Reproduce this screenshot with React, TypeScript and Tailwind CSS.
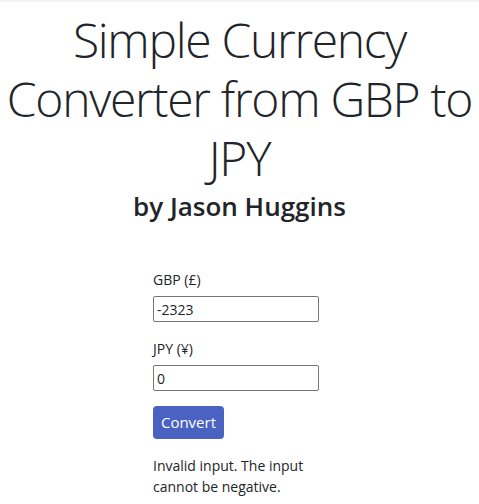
export default function App() {
  return (
    <div className="min-h-[504px] bg-white border-t-2 border-[#f3f3f3] text-[#212529] font-['Open_Sans','Noto_Sans',sans-serif]">
      <div className="pt-[8px] text-center">
        <h1 className="text-[48px] leading-[59px] font-light tracking-[-1.3px]">
          Simple Currency
          <br />
          Converter from GBP to
          <br />
          JPY
        </h1>
        <h2 className="mt-[3px] text-[26px] leading-[32px] font-semibold">by Jason Huggins</h2>
      </div>
      <form className="ml-[153px] mt-[48px] w-[170px] text-[14px]" onSubmit={(e) => e.preventDefault()}>
        <label className="block leading-[20px]">GBP (£)</label>
        <input
          className="mt-[6px] block w-[166px] h-[26px] border border-[#767676] rounded-[2px] px-[3px] text-[14px]"
          defaultValue="-2323"
        />
        <label className="mt-[17px] block leading-[20px]">JPY (¥)</label>
        <input
          className="mt-[6px] block w-[166px] h-[26px] border border-[#767676] rounded-[2px] px-[3px] text-[14px]"
          defaultValue="0"
        />
        <button
          type="submit"
          className="mt-[15px] w-[71px] h-[33px] rounded-[4px] bg-[#4a62c2] text-white text-[15px]"
        >
          Convert
        </button>
        <p className="mt-[16px] text-[14px] leading-[21px]">
          Invalid input. The input
          <br />
          cannot be negative.
        </p>
      </form>
    </div>
  );
}
